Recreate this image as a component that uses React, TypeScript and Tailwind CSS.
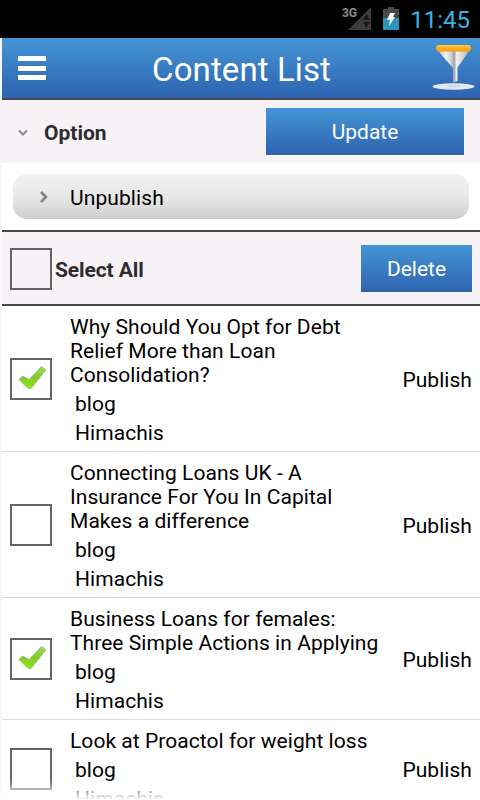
import { useState } from "react";

const initialItems = [
  {
    id: 1,
    lines: ["Why Should You Opt for Debt", "Relief More than Loan", "Consolidation?"],
    category: "blog",
    author: "Himachis",
    status: "Publish",
    checked: true,
  },
  {
    id: 2,
    lines: ["Connecting Loans UK - A", "Insurance For You In Capital", "Makes a difference"],
    category: "blog",
    author: "Himachis",
    status: "Publish",
    checked: false,
  },
  {
    id: 3,
    lines: ["Business Loans for females:", "Three Simple Actions in Applying"],
    category: "blog",
    author: "Himachis",
    status: "Publish",
    checked: true,
  },
  {
    id: 4,
    lines: ["Look at Proactol for weight loss"],
    category: "blog",
    author: "Himachis",
    status: "Publish",
    checked: false,
  },
];

function StatusBar() {
  return (
    <div className="flex h-[38px] shrink-0 items-center justify-end bg-black pr-[10px]">
      <svg className="mr-[12px] h-[38px] w-[30px]" viewBox="0 0 30 38">
        <path d="M30 7V30H7z" fill="#3b3b3b" />
        <path d="M25.500 14l3.500 6h-7zM22 22h7l-3.500 6z" fill="#171717" />
        <text x="1" y="17" fontSize="12" fontWeight="700" fill="#8a8a8a" textLength="15">
          3G
        </text>
      </svg>
      <svg className="mr-[11px] h-[38px] w-4" viewBox="0 0 16 38">
        <path d="M5 7h6v2h5v9H0V9h5z" fill="#484848" />
        <path d="M0 18h16v12H0z" fill="#2d93b8" />
        <path d="M7 13h5l-2 4h2l-6 9 1-6H4z" fill="#fff" />
      </svg>
      <span className="pt-[2px] text-[24px] leading-[36px] text-[#33b5e5]">11:45</span>
    </div>
  );
}

function FunnelIcon() {
  return (
    <svg className="h-[48px] w-[44px]" viewBox="0 0 44 48">
      <defs>
        <linearGradient id="cone" x1="0" x2="1">
          <stop offset="0" stopColor="#b9b9bc" />
          <stop offset="0.25" stopColor="#f4f4f4" />
          <stop offset="0.45" stopColor="#c9c8ca" />
          <stop offset="0.52" stopColor="#9f9ea1" />
          <stop offset="0.6" stopColor="#f2f2f2" />
          <stop offset="1" stopColor="#b5b5b9" />
        </linearGradient>
        <linearGradient id="rim" x1="0" y1="0" x2="0" y2="1">
          <stop offset="0" stopColor="#ffc94a" />
          <stop offset="0.5" stopColor="#fbb01b" />
          <stop offset="1" stopColor="#f29a12" />
        </linearGradient>
      </defs>
      <ellipse cx="21.500" cy="42.500" rx="21" ry="3.300" fill="#e6e8f1" />
      <ellipse cx="22" cy="42" rx="7" ry="1.300" fill="#d3d6e2" />
      <path d="M6 7h31L25.500 23.500V37l-4.500 1.500V24z" fill="url(#cone)" />
      <rect x="4" y="1" width="35" height="6.500" rx="3" fill="url(#rim)" />
    </svg>
  );
}

function Header() {
  return (
    <header className="ml-[2px] flex h-[62px] shrink-0 items-center justify-between border-b-2 border-[#4b484b] bg-linear-to-b from-[#4595d5] to-[#2e63b0] pr-1 pl-4">
      <button className="flex w-[28px] flex-col gap-[4.5px]" aria-label="Menu">
        <span className="h-[5px] bg-white" />
        <span className="h-[5px] bg-white" />
        <span className="h-[5px] bg-white" />
      </button>
      <h1 className="ml-[5px] pt-[3px] text-[33px] leading-[57px] tracking-[0.1px] text-white">Content List</h1>
      <button aria-label="Filter">
        <FunnelIcon />
      </button>
    </header>
  );
}

function Checkbox({ checked, onClick }: { checked: boolean; onClick: () => void }) {
  return (
    <button
      role="checkbox"
      aria-checked={checked}
      onClick={onClick}
      className="mt-px flex h-[42px] w-[42px] shrink-0 items-center justify-center border-2 border-[#666366]"
    >
      {checked && (
        <svg className="ml-1 h-[28px] w-[32px]" viewBox="0 0 32 28">
          <defs>
            <linearGradient id="tick" x1="0" y1="0" x2="0" y2="1">
              <stop offset="0" stopColor="#9bdc5c" />
              <stop offset="0.5" stopColor="#7fcb28" />
              <stop offset="1" stopColor="#92e60e" />
            </linearGradient>
          </defs>
          <path
            d="M2 14.500l3.500-3.500L12 14.500 24.500 1.500l4.500 3.500L14 23.500h-3z"
            fill="url(#tick)"
            stroke="#a3bf8c"
            strokeLinejoin="round"
          />
        </svg>
      )}
    </button>
  );
}

export default function App() {
  const [items, setItems] = useState(initialItems);
  const allChecked = items.every((item) => item.checked);

  const toggle = (id: number) => {
    setItems(items.map((item) => (item.id === id ? { ...item, checked: !item.checked } : item)));
  };

  const toggleAll = () => {
    setItems(items.map((item) => ({ ...item, checked: !allChecked })));
  };

  return (
    <div className="relative flex h-[800px] w-[480px] flex-col overflow-hidden bg-[#f8f7f8] font-['Roboto',sans-serif] text-[21px] text-black">
      <StatusBar />
      <Header />

      {/* Option */}
      <div className="flex h-[63px] shrink-0 items-center bg-[#f6f2f6] pr-4 pl-[18px]">
        <svg className="mt-[2px] h-[10px] w-[10px]" viewBox="0 0 10 10">
          <path d="M1 2.500l4 4 4-4" fill="none" stroke="#8b888d" strokeWidth="2" />
        </svg>
        <span className="mt-[4px] ml-4 font-bold text-[#2f2c30]">Option</span>
        <button className="mb-px ml-auto h-[47px] w-[198px] bg-linear-to-b from-[#4595d5] to-[#2e63b0] pt-[4px] text-white">
          Update
        </button>
      </div>

      {/* Unpublish */}
      <div className="ml-[2px] h-[69px] shrink-0 border-b-2 border-[#4b484b] bg-white pt-[11px] pr-[11px] pl-[11px]">
        <button className="flex h-[45px] w-full items-center rounded-[14px] bg-linear-to-b from-[#f3f2f3] via-[#e9e8e9] to-[#cecece] pl-[26px]">
          <svg className="h-[14px] w-[10px]" viewBox="0 0 10 14">
            <path d="M2 2l5 5-5 5" fill="none" stroke="#858287" strokeWidth="2.500" />
          </svg>
          <span className="mt-[4px] ml-[21px] tracking-[0.1px]">Unpublish</span>
        </button>
      </div>

      {/* Select all */}
      <div className="ml-[2px] flex h-[74px] shrink-0 items-center border-b-2 border-[#4b484b] bg-[#f6f2f6] pr-2 pl-2">
        <Checkbox checked={allChecked} onClick={toggleAll} />
        <span className="mt-[5px] ml-[3px] font-bold tracking-[-0.1px] text-[#2f2c30]">Select All</span>
        <button className="ml-auto h-[47px] w-[111px] bg-linear-to-b from-[#4595d5] to-[#2e63b0] pt-[4px] text-white">
          Delete
        </button>
      </div>

      {/* Content items */}
      <ul className="ml-[2px] shrink-0 bg-white tracking-[0.05px]">
        {items.map((item) => (
          <li key={item.id} className="flex items-center border-b border-[#dcdcdc] pr-2 pl-2">
            <Checkbox checked={item.checked} onClick={() => toggle(item.id)} />
            <div className="ml-[18px] flex-1 pt-[9px] pb-[3px] whitespace-nowrap">
              {item.lines.map((line) => (
                <p key={line} className="leading-6">
                  {line}
                </p>
              ))}
              <p className="mt-[3px] pl-[5px] leading-[29px]">{item.category}</p>
              <p className="pl-[5px] leading-[29px]">{item.author}</p>
            </div>
            <span className="mt-[4px]">{item.status}</span>
          </li>
        ))}
      </ul>
      {/* Fading edge at the bottom of the scroll area */}
      <div className="absolute right-0 bottom-0 left-0 h-[22px] bg-linear-to-b from-white/0 to-white" />
    </div>
  );
}
